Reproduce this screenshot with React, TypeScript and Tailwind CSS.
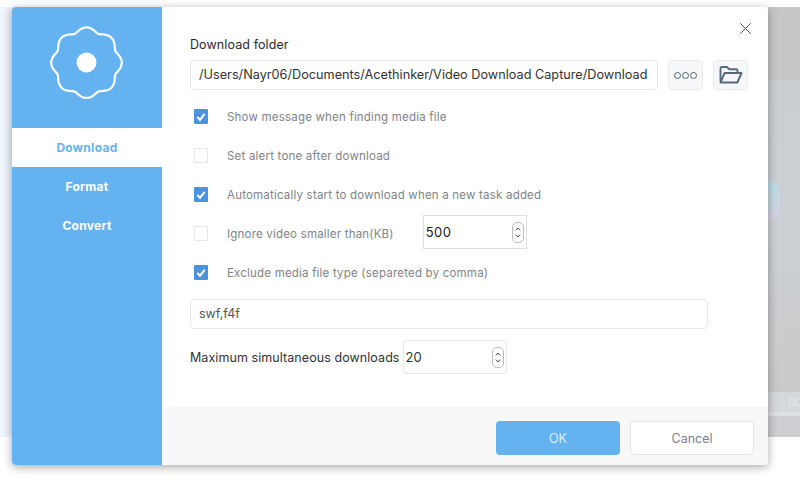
import React from "react";

const flower = (() => {
  const cx = 74.5, cy = 55.7, pts: string[] = [];
  for (let i = 0; i < 360; i += 1) {
    const a = ((i - 90) * Math.PI) / 180;
    const c = Math.cos((4 * i * Math.PI) / 180);
    const r = 28 + 6.5 * Math.sqrt(c * c + 0.25);
    pts.push(`${(cx + r * Math.cos(a)).toFixed(2)},${(cy + r * Math.sin(a)).toFixed(2)}`);
  }
  return pts.join(" ");
})();

function Check({ on }: { on: boolean }) {
  return on ? (
    <span className="flex h-[15px] w-[14px] items-center justify-center rounded-[1px] bg-[#4a94dd]">
      <svg width="10" height="10" viewBox="0 0 10 10" fill="none">
        <path d="M1.4 4.8 L4 7.8 L8.6 1.8" stroke="#fff" strokeWidth="2" />
      </svg>
    </span>
  ) : (
    <span className="h-[15px] w-[14px] rounded-[1px] border border-[#e6e6e6] bg-white" />
  );
}

function Row({ on, label, children }: { on: boolean; label: string; children?: React.ReactNode }) {
  return (
    <div className="flex h-[39px] items-center pl-[4px]">
      <Check on={on} />
      <span className="ml-[19px] pt-[3px] text-[11.5px] tracking-[0.2px] text-[#808487]">{label}</span>
      {children}
    </div>
  );
}

function Stepper() {
  return (
    <span className="flex h-[21px] w-[12px] flex-col items-center justify-center gap-[3px] rounded-[5px] border border-[#bbbbbb] bg-white">
      <svg width="6" height="4" viewBox="0 0 6 4" fill="none"><path d="M0.8 3.4 L3 1 L5.2 3.4" stroke="#444" strokeWidth="1" /></svg>
      <svg width="6" height="4" viewBox="0 0 6 4" fill="none"><path d="M0.8 0.6 L3 3 L5.2 0.6" stroke="#444" strokeWidth="1" /></svg>
    </span>
  );
}

export default function App() {
  return (
    <div className="relative h-[480px] w-[800px] overflow-hidden bg-white font-['Inter','Liberation_Sans',sans-serif]">
      <div className="absolute left-0 top-[7px] h-[430px] w-[12px] bg-gradient-to-r from-[#f1f6fc] to-[#e8f0f9]" />
      <div className="absolute left-[768px] top-[7px] flex h-[430px] w-[32px] flex-col bg-[#c9cacc]">
        <div className="h-[73px] bg-[#c7c7c8]" />
        <div className="relative flex-1 overflow-hidden bg-gradient-to-b from-[#c9ced3] via-[#ccd0d4] to-[#c9c9ca]">
          <div className="absolute left-[-16px] top-[101px] h-[40px] w-[28px] rounded-full bg-gradient-to-b from-[#b9dfe6] to-[#d8cfe2] blur-[1px]" />
        </div>
        <div className="flex h-[20px] items-center bg-[#d4d7dc] pl-[20px] text-[11px] text-[#e4e9ef]">00</div>
        <div className="h-[4px] bg-[#dfe0e3]" />
        <div className="h-[21px] bg-[#cdced2]" />
      </div>

      <div className="relative ml-[12px] mt-[7px] flex h-[458px] w-[756px] overflow-hidden rounded-[4px] bg-white shadow-[0_2px_10px_rgba(0,0,0,0.35)]">
        <aside className="flex w-[150px] shrink-0 flex-col bg-[#64b3f0]">
          <div className="flex h-[121px] items-center justify-center">
            <svg width="150" height="121" viewBox="0 0 150 121" fill="none">
              <polygon points={flower} stroke="#fff" strokeWidth="2.2" strokeLinejoin="round" />
              <circle cx="74.5" cy="55.5" r="10" fill="#fff" />
            </svg>
          </div>
          <div className="flex h-[39px] items-center justify-center bg-white text-[12px] font-bold tracking-[0.3px] text-[#64b3f0]">Download</div>
          <div className="flex h-[39px] items-center justify-center text-[12px] font-bold tracking-[0.3px] text-white">Format</div>
          <div className="flex h-[39px] items-center justify-center text-[12px] font-bold tracking-[0.3px] text-white">Convert</div>
        </aside>

        <main className="flex min-w-0 flex-1 flex-col">
          <div className="flex-1 pl-[28px] pt-[29px]">
            <div className="text-[12.5px] leading-[17px] tracking-[0.1px] text-[#2b2b2b]">Download folder</div>
            <div className="mt-[7px] flex h-[30px] items-center">
              <div className="flex h-[30px] w-[468px] items-center rounded-[4px] border border-[#e4e6e9] pl-[8px] text-[12.7px] whitespace-nowrap text-[#333]">
                /Users/Nayr06/Documents/Acethinker/Video Download Capture/Download
              </div>
              <div className="ml-[10px] flex h-[30px] w-[35px] items-center justify-center gap-[1px] rounded-[5px] border border-[#e8e9eb] bg-[#f6f7f9]">
                <span className="h-[7px] w-[7px] rounded-full border-[1.5px] border-[#4e6072]" />
                <span className="h-[7px] w-[7px] rounded-full border-[1.5px] border-[#4e6072]" />
                <span className="h-[7px] w-[7px] rounded-full border-[1.5px] border-[#4e6072]" />
              </div>
              <div className="ml-[10px] flex h-[30px] w-[35px] items-center justify-center rounded-[5px] border border-[#e8e9eb] bg-[#f6f7f9]">
                <svg width="24" height="20" viewBox="0 0 24 20" fill="none" stroke="#56687a" strokeWidth="1.9" strokeLinejoin="round">
                  <path d="M1.5 16.5 V3.5 Q1.5 2 3 2 H8 L10 4.2 H17 Q18.5 4.2 18.5 5.7 V7.5" />
                  <path d="M1.5 17.5 L5.6 8 H22.5 L18.4 17.5 Z" />
                </svg>
              </div>
            </div>

            <div className="mt-[7px] flex flex-col">
              <Row on label="Show message when finding media file" />
              <Row on={false} label="Set alert tone after download" />
              <Row on label="Automatically start to download when a new task added" />
              <Row on={false} label="Ignore video smaller than(KB)">
                <div className="ml-[29px] mt-[-3px] flex h-[34px] w-[104px] items-center justify-between border border-[#dddddd] pl-[2px] pr-[2px] text-[13px] tracking-[0.4px] text-[#222]">
                  <span className="pt-[2px]">500</span>
                  <Stepper />
                </div>
              </Row>
              <Row on label="Exclude media file type (separeted by comma)" />
            </div>

            <div className="mt-[7px] flex h-[30px] w-[518px] items-center rounded-[4px] border border-[#e4e6e9] pl-[8px] pt-[1px] text-[12.5px] text-[#555]">swf,f4f</div>
            <div className="mt-[11px] flex h-[34px] items-center">
              <span className="pt-[2px] text-[12.5px] tracking-[0.07px] text-[#333]">Maximum simultaneous downloads</span>
              <div className="ml-[3px] flex h-[34px] w-[104px] items-center justify-between rounded-[4px] border border-[#e4e6e9] pl-[2px] pr-[2px] text-[13px] text-[#333]">
                <span className="pt-[2px]">20</span>
                <Stepper />
              </div>
            </div>
          </div>

          <footer className="flex h-[58px] items-start justify-end gap-[10px] bg-[#f8f8f9] pr-[14px] pt-[14px]">
            <button className="flex h-[34px] w-[124px] items-center justify-center rounded-[4px] bg-[#64b3f0] pt-[2px] text-[12.5px] text-[#d9edfc]">OK</button>
            <button className="flex h-[34px] w-[124px] items-center justify-center rounded-[4px] border border-[#e2e4e7] bg-white pt-[2px] text-[12.5px] text-[#7c8288]">Cancel</button>
          </footer>
        </main>

        <svg className="absolute right-[17px] top-[16px]" width="11" height="11" viewBox="0 0 11 11" fill="none" stroke="#555" strokeWidth="1">
          <path d="M0.2 0.2 L10.8 10.8 M10.8 0.2 L0.2 10.8" />
        </svg>
      </div>
    </div>
  );
}
